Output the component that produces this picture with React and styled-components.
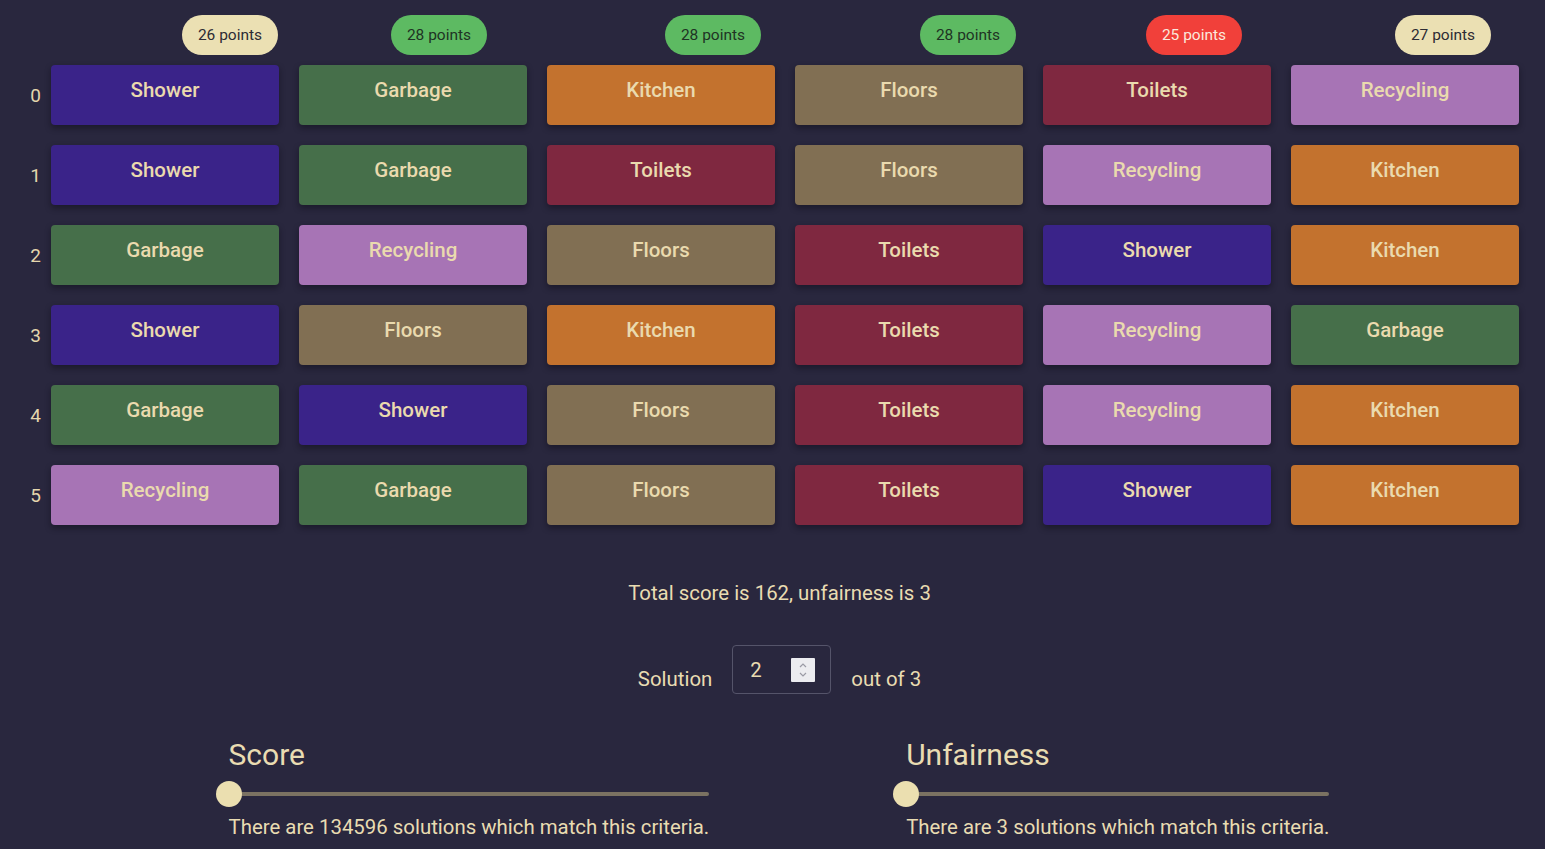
import React from "react";
import styled, { createGlobalStyle } from "styled-components";

const Global = createGlobalStyle`
  html, body { margin: 0; padding: 0; background: #29273e; }
  body { font-family: Roboto, "Noto Sans", sans-serif; color: #e9dcb2; }
`;

const CHORE_COLORS = {
  Shower: "#3a2389",
  Garbage: "#466f4a",
  Kitchen: "#c3722e",
  Floors: "#816f53",
  Toilets: "#7f2840",
  Recycling: "#a774b5",
};

const BADGE = {
  cream: { bg: "#ebe0b3", fg: "#2d2b33" },
  green: { bg: "#5dba62", fg: "#1f3324" },
  red: { bg: "#f1403a", fg: "#fbe9dd" },
};

const headers = [
  { text: "26 points", tone: "cream", offset: 131 },
  { text: "28 points", tone: "green", offset: 92 },
  { text: "28 points", tone: "green", offset: 118 },
  { text: "28 points", tone: "green", offset: 125 },
  { text: "25 points", tone: "red", offset: 103 },
  { text: "27 points", tone: "cream", offset: 104 },
];

const rows = [
  ["Shower", "Garbage", "Kitchen", "Floors", "Toilets", "Recycling"],
  ["Shower", "Garbage", "Toilets", "Floors", "Recycling", "Kitchen"],
  ["Garbage", "Recycling", "Floors", "Toilets", "Shower", "Kitchen"],
  ["Shower", "Floors", "Kitchen", "Toilets", "Recycling", "Garbage"],
  ["Garbage", "Shower", "Floors", "Toilets", "Recycling", "Kitchen"],
  ["Recycling", "Garbage", "Floors", "Toilets", "Shower", "Kitchen"],
];

const Page = styled.div`
  padding: 15px 6px 0 20px;
  min-height: 849px;
  box-sizing: border-box;
`;

const Grid = styled.div`
  display: grid;
  grid-template-columns: 11px repeat(6, 228px);
  grid-template-rows: 30px;
  grid-auto-rows: 60px;
  column-gap: 20px;
  row-gap: 20px;
`;

const Corner = styled.div``;

const HeaderCell = styled.div`
  display: flex;
  align-items: flex-start;
  height: 30px;
`;

const Badge = styled.div`
  margin-left: ${(p) => p.$offset}px;
  width: 96px;
  height: 40px;
  border-radius: 20px;
  background: ${(p) => BADGE[p.$tone].bg};
  color: ${(p) => BADGE[p.$tone].fg};
  font-size: 15.5px;
  display: flex;
  align-items: center;
  justify-content: center;
  flex-shrink: 0;
`;

const RowLabel = styled.div`
  width: 31px;
  justify-self: start;
  display: flex;
  align-items: center;
  justify-content: center;
  padding-top: 1px;
  font-size: 19px;
  color: #e4d6ad;
`;

const Cell = styled.div`
  background: ${(p) => CHORE_COLORS[p.$chore]};
  border-radius: 4px;
  box-shadow: 0 3px 6px rgba(10, 8, 20, 0.45);
  color: #eadaae;
  font-size: 20.5px;
  font-weight: 500;
  display: flex;
  justify-content: center;
  padding-top: 13px;
  box-sizing: border-box;
`;

const Summary = styled.div`
  text-align: center;
  font-size: 20.4px;
  margin-top: 56px;
  line-height: 24px;
`;

const SolutionRow = styled.div`
  display: flex;
  justify-content: center;
  align-items: flex-end;
  gap: 20px;
  margin-top: 40px;
`;

const SolutionLabel = styled.span`
  font-size: 20.4px;
  line-height: 24px;
  padding-bottom: 3px;
`;

const NumberBox = styled.div`
  width: 99px;
  height: 49px;
  box-sizing: border-box;
  border: 1px solid #55546a;
  border-radius: 4px;
  display: flex;
  align-items: flex-start;
  padding: 12px 15px 0 17px;
  justify-content: space-between;
  font-size: 20.4px;
  line-height: 24px;
`;

const Spinner = styled.div`
  width: 24px;
  height: 24px;
  background: #ececf0;
  border-radius: 1px;
  display: flex;
  align-items: center;
  justify-content: center;
`;

const Filters = styled.div`
  display: flex;
  justify-content: center;
  gap: 184px;
  margin-top: 44px;
  padding-right: 14px;
`;

const Filter = styled.div`
  display: flex;
  flex-direction: column;
`;

const FilterTitle = styled.div`
  font-size: 30px;
  line-height: 34px;
  padding-left: 13px;
`;

const Track = styled.div`
  position: relative;
  height: 4px;
  margin: 20px 0 0 13px;
  background: #7b7262;
  border-radius: 2px;
`;

const Thumb = styled.div`
  position: absolute;
  left: -13px;
  top: -11px;
  width: 26px;
  height: 26px;
  border-radius: 50%;
  background: #ebdfb0;
`;

const FilterNote = styled.div`
  font-size: 20.4px;
  line-height: 24px;
  margin-top: 19px;
  padding-left: 13px;
  white-space: nowrap;
`;

function SpinIcon() {
  return (
    <svg width="12" height="18" viewBox="0 0 12 18" fill="none" stroke="#9a9aa5" strokeWidth="1.2">
      <path d="M3 6 L6 3 L9 6" />
      <path d="M3 12 L6 15 L9 12" />
    </svg>
  );
}

export default function App() {
  return (
    <>
      <Global />
      <Page>
        <Grid>
          <Corner />
          {headers.map((h, i) => (
            <HeaderCell key={i}>
              <Badge $tone={h.tone} $offset={h.offset}>{h.text}</Badge>
            </HeaderCell>
          ))}
          {rows.map((r, ri) => (
            <React.Fragment key={ri}>
              <RowLabel>{ri}</RowLabel>
              {r.map((c, ci) => (
                <Cell key={ci} $chore={c}>{c}</Cell>
              ))}
            </React.Fragment>
          ))}
        </Grid>
        <Summary>Total score is 162, unfairness is 3</Summary>
        <SolutionRow>
          <SolutionLabel>Solution</SolutionLabel>
          <NumberBox>
            <span>2</span>
            <Spinner><SpinIcon /></Spinner>
          </NumberBox>
          <SolutionLabel>out of 3</SolutionLabel>
        </SolutionRow>
        <Filters>
          <Filter>
            <FilterTitle>Score</FilterTitle>
            <Track><Thumb /></Track>
            <FilterNote>There are 134596 solutions which match this criteria.</FilterNote>
          </Filter>
          <Filter>
            <FilterTitle>Unfairness</FilterTitle>
            <Track><Thumb /></Track>
            <FilterNote>There are 3 solutions which match this criteria.</FilterNote>
          </Filter>
        </Filters>
      </Page>
    </>
  );
}
